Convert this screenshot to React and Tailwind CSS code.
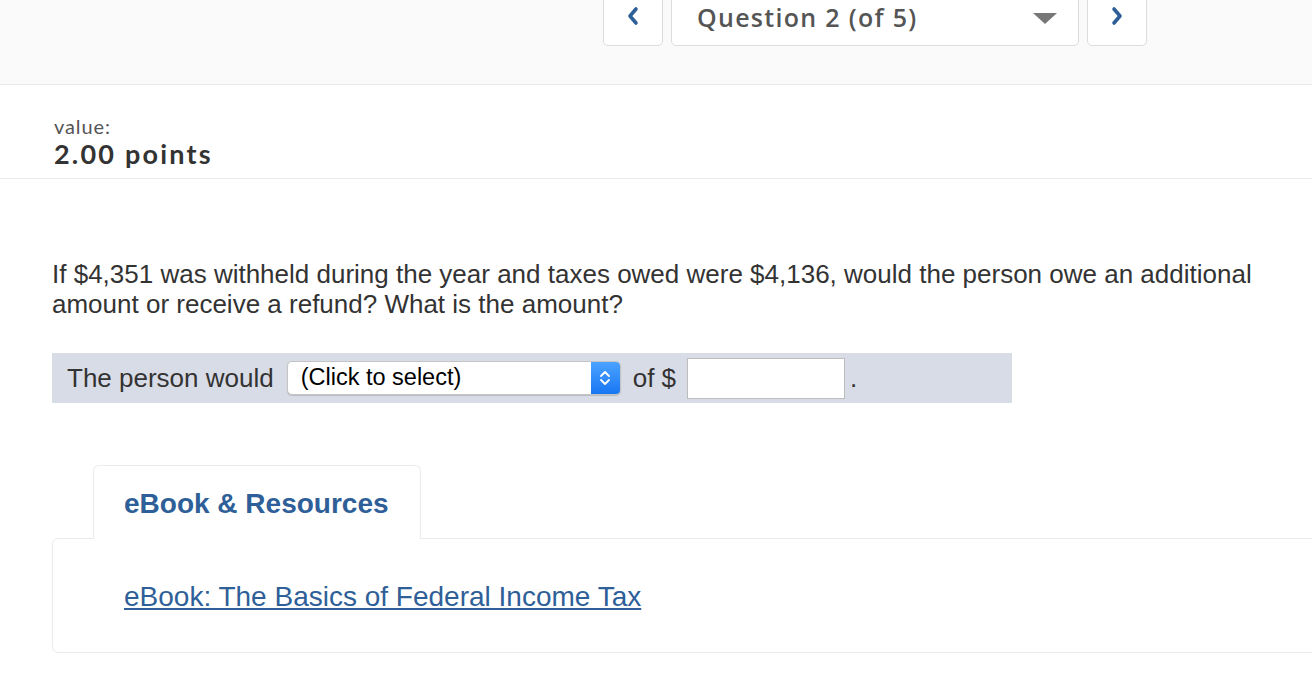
export default function App() {
  return (
    <div className="w-[1312px] h-[688px] overflow-hidden bg-white font-['Liberation_Sans',Arial,sans-serif] text-[#333]">
      {/* top nav */}
      <div className="h-[86px] bg-[#fafafa] border-b border-[#ebebeb]">
        <div className="ml-[603px] flex gap-2 items-start -mt-px">
          <button className="w-[60px] h-[47px] bg-white border border-[#dcdcdc] rounded-b-[5px] flex items-center justify-center">
            <svg width="14" height="20" viewBox="0 0 14 20" className="-mt-[14px]">
              <polyline points="10,3 4,10 10,17" fill="none" stroke="#2f5f98" strokeWidth="3.6" strokeLinecap="round" strokeLinejoin="round" />
            </svg>
          </button>
          <div className="w-[408px] h-[47px] bg-white border border-[#dcdcdc] rounded-b-[5px] flex items-start pt-[1px] pl-[25px] pr-[21px]">
            <span className="font-['Open_Sans',sans-serif] font-semibold text-[25px] leading-[32px] tracking-[1.3px] text-[#555]">Question 2 (of 5)</span>
            <svg width="24" height="11" viewBox="0 0 24 11" className="ml-auto mt-[12px]">
              <polygon points="0,0 24,0 12,11" fill="#777" />
            </svg>
          </div>
          <button className="w-[60px] h-[47px] bg-white border border-[#dcdcdc] rounded-b-[5px] flex items-center justify-center">
            <svg width="14" height="20" viewBox="0 0 14 20" className="-mt-[14px]">
              <polyline points="4,3 10,10 4,17" fill="none" stroke="#2f5f98" strokeWidth="3.6" strokeLinecap="round" strokeLinejoin="round" />
            </svg>
          </button>
        </div>
      </div>

      {/* value */}
      <div className="border-b border-[#ebebeb] pl-[54px] pt-[29px] pb-[8px]">
        <div className="font-['Lato',sans-serif] text-[20px] leading-[24px] tracking-[0.9px] text-[#555]">value:</div>
        <div className="font-['Lato',sans-serif] font-bold text-[27px] leading-[32px] tracking-[2.2px] text-[#333]">2.00 points</div>
      </div>

      {/* question */}
      <div className="pl-[52px] mt-[80px] w-[1300px]">
        <p className="w-[1230px] text-[26px] leading-[30px] text-[#333]">
          If $4,351 was withheld during the year and taxes owed were $4,136, would the person owe an additional amount or receive a refund? What is the amount?
        </p>

        <div className="mt-[34px] w-[960px] h-[50px] bg-[#d8dce6] flex items-center pl-[15px] text-[26px]">
          <span>The person would</span>
          <div className="ml-[13px] w-[334px] h-[34px] bg-white border border-[#c4c4c4] rounded-[5px] flex items-center overflow-hidden shadow-[0_1px_1px_rgba(0,0,0,0.15)]">
            <span className="pl-[13px] text-[23.5px] text-black">(Click to select)</span>
            <div className="ml-auto w-[29px] h-full bg-gradient-to-b from-[#4aa3ff] to-[#1676f3] flex items-center justify-center">
              <svg width="12" height="20" viewBox="0 0 12 20">
                <polyline points="2,8 6,4 10,8" fill="none" stroke="white" strokeWidth="1.8" strokeLinecap="round" strokeLinejoin="round" />
                <polyline points="2,12 6,16 10,12" fill="none" stroke="white" strokeWidth="1.8" strokeLinecap="round" strokeLinejoin="round" />
              </svg>
            </div>
          </div>
          <span className="ml-[12px]">of $</span>
          <div className="ml-[11px] w-[158px] h-[41px] bg-white border border-[#bdbdbd]"></div>
          <span className="ml-[5px]">.</span>
        </div>

        {/* resources */}
        <div className="mt-[62px] ml-[41px] w-[328px] h-[74px] bg-white border border-b-0 border-[#ebebeb] rounded-t-[6px] relative z-10 -mb-px flex items-center pl-[30px] pt-[3px]">
          <span className="font-bold text-[28px] text-[#2f5f98]">eBook &amp; Resources</span>
        </div>
        <div className="w-[1300px] h-[115px] border border-[#ebebeb] rounded-[6px] pl-[71px] pt-[42px]">
          <a href="#" className="text-[28px] leading-[32px] text-[#2f5f98] underline">eBook: The Basics of Federal Income Tax</a>
        </div>
      </div>
    </div>
  );
}
